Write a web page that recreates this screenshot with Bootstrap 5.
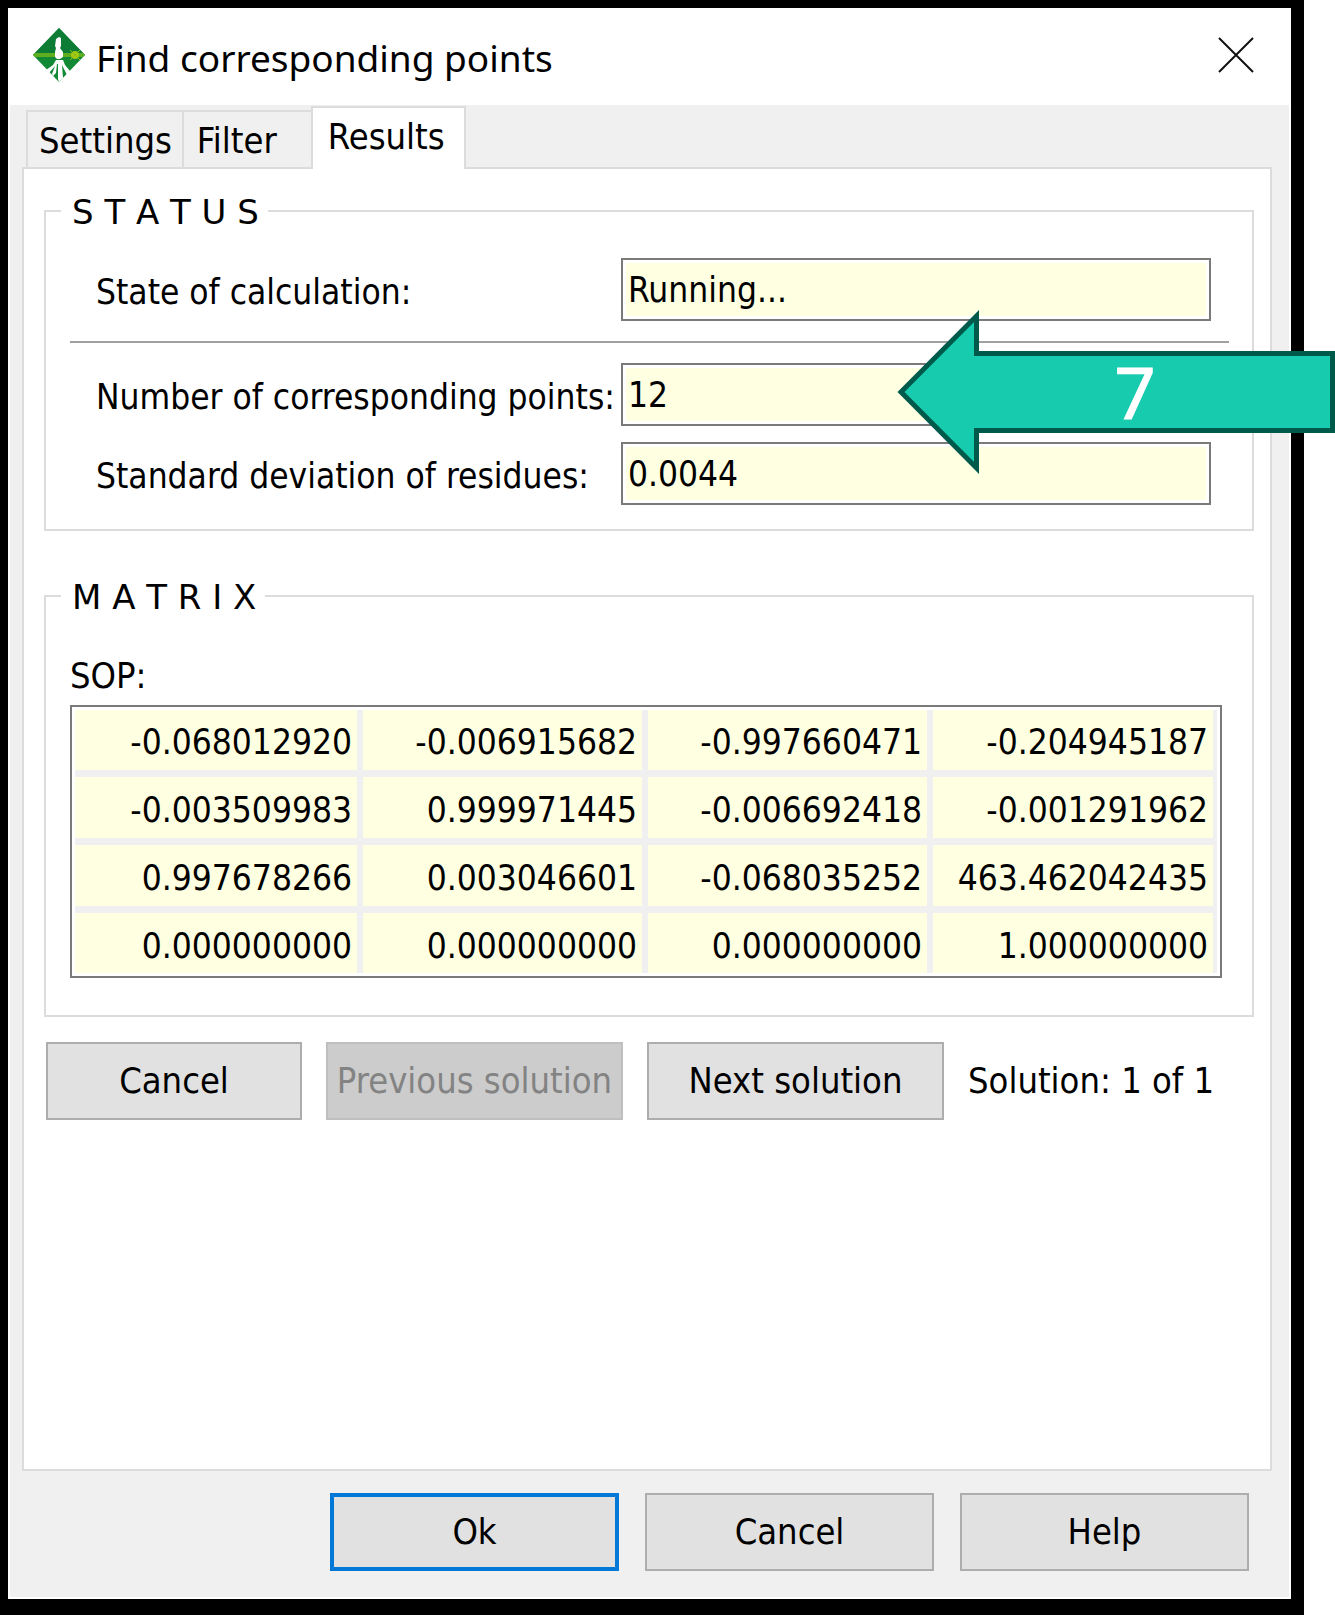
<!DOCTYPE html>
<html lang="en">
<head>
<meta charset="utf-8">
<meta name="viewport" content="width=device-width, initial-scale=1">
<title>Find corresponding points</title>
<link href="https://cdn.jsdelivr.net/npm/bootstrap@5.3.0/dist/css/bootstrap.min.css" rel="stylesheet">
<style>
  body { background: #fff; color: #000; font-family: "DejaVu Sans Condensed", "DejaVu Sans", sans-serif; font-stretch: condensed; font-size: 36px; line-height: 42px; }
  .dialog-frame { min-height: 100vh; margin-right: 31px; background: #000; padding: 8px 13px 16px 8px; }
  .dialog-win { background: #f0f0f0; border: 2px solid #fff; border-top: 0; }
  .title-bar { background: #fff; height: 97px; padding: 0 35px 3px 22px; }
  .title-text { font-family: "Noto Sans", sans-serif; font-stretch: normal; font-size: 37px; line-height: 48px; font-weight: 400; margin: 6px 0 0 10px; }
  .close-btn { border: 0; background: none; padding: 0; line-height: 0; }
  .tab-area { padding: 1px 17px 0 12px; }
  .nav-tabs.dlg-tabs { border: 0; padding-left: 4px; align-items: flex-end; position: relative; z-index: 1; flex-wrap: nowrap; }
  .dlg-tabs .nav-link { border: 2px solid #dcdcdc; border-bottom: 0; border-radius: 0; background: #f0f0f0; color: #000; margin: 0; padding: 8px 10px 7px 11px; text-align: left; height: 57px; white-space: nowrap; }
  .dlg-tabs .tab-joined { border-right: 0; }
  .dlg-tabs .tab-filter { width: 129px; border-right: 0; padding-left: 13px; }
  .dlg-tabs .nav-link.active { border-color: #dcdcdc; background: #fff; color: #000; height: 63px; width: 155px; padding: 8px 15px 11px; margin-bottom: -2px; }
  .tab-panel { background: #fff; border: 2px solid #dcdcdc; padding: 24px 16px 0 20px; }
  .group-box { border: 2px solid #dcdcdc; padding: 0 23px 0 24px; }
  .group-box legend { float: none; width: auto; margin: 0 0 0 -9px; padding: 3px 9px 0 11px; font-family: "DejaVu Sans", sans-serif; font-stretch: normal; font-size: 34px; line-height: 33px; }
  .group-status { margin: 0; padding-bottom: 24px; }
  .group-status legend { margin-bottom: 29px; }
  .group-matrix { margin-top: 47px; padding-bottom: 37px; }
  .group-matrix legend { margin-bottom: 41px; }
  .field-row { padding: 0 18px 0 26px; }
  .field-row label { flex: 0 0 525px; white-space: nowrap; font-size: 35px; padding-top: 4px; }
  .field-row .form-control { height: 63px; border: 2px solid #7a7a7a; border-radius: 0; background: #ffffe1; box-shadow: inset 0 0 0 3px #fff; color: #000; font: inherit; font-size: 35px; padding: 0 5px; min-width: 0; }
  .rule-line { height: 2px; margin: 20px 0; border: 0; background: #a0a0a0; opacity: 1; }
  .matrix-frame { border: 2px solid #7a7a7a; padding: 3px; margin-right: 7px; }
  .matrix-grid { width: 100%; height: 263px; table-layout: fixed; border-collapse: collapse; background: #f0f0f0; border-right: 4px solid #f0f0f0; }
  .matrix-grid td { background: #ffffe1; text-align: right; padding: 5px 5px 0 0; vertical-align: middle; white-space: nowrap; font-size: 35px; line-height: 40px; }
  .matrix-grid td + td { border-left: 6px solid #f0f0f0; }
  .matrix-grid tr + tr td { border-top: 7px solid #f0f0f0; }
  .btn.dlg-btn { height: 78px; border: 2px solid #adadad; border-radius: 0; background: #e1e1e1; color: #000; font-size: 36px; line-height: 42px; padding: 0; white-space: nowrap; }
  .btn.dlg-btn:disabled { background: #ccc; border-color: #bfbfbf; color: #838383; opacity: 1; }
  .btn.dlg-btn.is-default { border: 4px solid #0078d7; }
  .solution-bar { margin: 25px 0 0 2px; gap: 24px; }
  .solution-bar .w-side { width: 256px; }
  .solution-bar .w-nav { width: 297px; }
  .bottom-bar { gap: 26px; padding: 22px 40px 26px; }
  .bottom-bar .dlg-btn { width: 289px; }
  .callout { position: absolute; right: 0; top: 307px; width: 438px; height: 170px; }
  .callout-num { font-family: "Noto Sans", sans-serif; font-stretch: normal; font-size: 72px; fill: #fff; stroke: #fff; stroke-width: 1px; }
</style>
</head>
<body class="position-relative">
<div class="dialog-frame d-flex">
  <main class="dialog-win flex-grow-1 d-flex flex-column">
    <header class="title-bar d-flex align-items-center">
      <svg width="54" height="56" viewBox="0 0 54 56" aria-hidden="true">
        <path d="M27 1 53 28 27 55 1 28Z" fill="#128a35"/>
        <path d="M27 1 53 28H1Z" fill="#0d7d36"/>
        <path d="M3 26h48l2 2-2 2H3l-2-2Z" fill="#5fae1f"/>
        <circle cx="43" cy="28" r="4" fill="#a5c80d"/>
        <path d="M38 23l10 10M48 23 38 33" stroke="#8fc01a" stroke-width="1"/>
        <path d="M24 12l3-2 2 1v8l-1 2 3 4v5l-3 2h-3l-2-2v-5l1-4-1-2Z" fill="#fff"/>
        <path d="M24 33h7l2 5 5 6-3 4-5-10 1 13-4 4-1-3V37h-1l-1 9-3 3-1-2 3-8-6 7-3-3 7-5Z" fill="#fff"/>
      </svg>
      <h1 class="title-text">Find corresponding points</h1>
      <button class="close-btn ms-auto" type="button" aria-label="Close">
        <svg width="36" height="36" viewBox="0 0 36 36"><path d="M1 1 35 35M35 1 1 35" stroke="#111" stroke-width="2" fill="none"/></svg>
      </button>
    </header>
    <div class="tab-area flex-grow-1 d-flex flex-column">
      <div class="nav nav-tabs dlg-tabs" role="tablist">
        <button class="nav-link tab-joined" type="button" role="tab">Settings</button>
        <button class="nav-link tab-filter" type="button" role="tab">Filter</button>
        <button class="nav-link active" type="button" role="tab" aria-selected="true">Results</button>
      </div>
      <section class="tab-panel flex-grow-1">
        <fieldset class="group-box group-status">
          <legend>S T A T U S</legend>
          <div class="field-row d-flex align-items-center">
            <label for="state">State of calculation:</label>
            <input class="form-control" id="state" type="text" value="Running..." readonly>
          </div>
          <hr class="rule-line">
          <div class="field-row d-flex align-items-center mb-3">
            <label for="count">Number of corresponding points:</label>
            <input class="form-control" id="count" type="text" value="12" readonly>
          </div>
          <div class="field-row d-flex align-items-center">
            <label for="deviation">Standard deviation of residues:</label>
            <input class="form-control" id="deviation" type="text" value="0.0044" readonly>
          </div>
        </fieldset>
        <fieldset class="group-box group-matrix">
          <legend>M A T R I X</legend>
          <div id="sop" class="mb-2">SOP:</div>
          <div class="matrix-frame">
            <table class="matrix-grid" aria-labelledby="sop">
              <tbody>
                <tr><td>-0.068012920</td><td>-0.006915682</td><td>-0.997660471</td><td>-0.204945187</td></tr>
                <tr><td>-0.003509983</td><td>0.999971445</td><td>-0.006692418</td><td>-0.001291962</td></tr>
                <tr><td>0.997678266</td><td>0.003046601</td><td>-0.068035252</td><td>463.462042435</td></tr>
                <tr><td>0.000000000</td><td>0.000000000</td><td>0.000000000</td><td>1.000000000</td></tr>
              </tbody>
            </table>
          </div>
        </fieldset>
        <div class="solution-bar d-flex align-items-center">
          <button class="btn dlg-btn w-side" type="button">Cancel</button>
          <button class="btn dlg-btn w-nav" type="button" disabled>Previous solution</button>
          <button class="btn dlg-btn w-nav" type="button">Next solution</button>
          <span class="text-nowrap">Solution: 1 of 1</span>
        </div>
      </section>
    </div>
    <footer class="bottom-bar d-flex justify-content-end">
      <button class="btn dlg-btn is-default" type="button">Ok</button>
      <button class="btn dlg-btn" type="button">Cancel</button>
      <button class="btn dlg-btn" type="button">Help</button>
    </footer>
  </main>
</div>
<svg class="callout" viewBox="0 0 438 170" role="img" aria-label="Step 7">
  <path d="M4 85 79.500 9V46.500H435.500V123.500H79.500V161Z" fill="#17cbaf" stroke="#005a4b" stroke-width="5"/>
  <text class="callout-num" x="238" y="112" text-anchor="middle">7</text>
</svg>
<script src="https://cdn.jsdelivr.net/npm/bootstrap@5.3.0/dist/js/bootstrap.bundle.min.js"></script>
</body>
</html>
